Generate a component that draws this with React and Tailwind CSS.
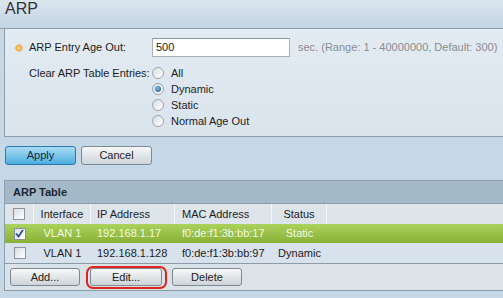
import React from "react";

function Check({ checked }) {
  return (
    <div className="w-[12px] h-[12px] border border-[#8b949c] bg-gradient-to-br from-[#d9dee2] to-white flex items-center justify-center">
      {checked && (
        <svg width="9" height="9" viewBox="0 0 9 9">
          <path d="M1 4.5 L3.5 7.5 L8 1" fill="none" stroke="#2c4f9e" strokeWidth="1.8" />
        </svg>
      )}
    </div>
  );
}

function Radio({ on }) {
  return (
    <div className="w-[12px] h-[12px] rounded-full border border-[#9ba5ae] bg-gradient-to-br from-[#d8dde2] to-white flex items-center justify-center">
      {on && (
        <div className="w-[6px] h-[6px] rounded-full bg-[radial-gradient(circle_at_40%_35%,#7cc0ea,#1c4e7c)]" />
      )}
    </div>
  );
}

function GrayBtn({ children, w }) {
  return (
    <div
      className={`${w} h-[18px] rounded-[3px] border border-[#7e8a93] bg-gradient-to-b from-[#f6f8f9] to-[#cdd4d9] flex items-center justify-center text-[#222]`}
    >
      {children}
    </div>
  );
}

export default function App() {
  const rows = [
    { iface: "VLAN 1", ip: "192.168.1.17", mac: "f0:de:f1:3b:bb:17", status: "Static", sel: true },
    { iface: "VLAN 1", ip: "192.168.1.128", mac: "f0:de:f1:3b:bb:97", status: "Dynamic", sel: false },
  ];
  return (
    <div className="w-[503px] h-[298px] overflow-hidden bg-[#c6d7e5] font-['Liberation_Sans',Arial,sans-serif] text-[11px] text-[#1c1c1c]">
      {/* Title */}
      <div className="h-[29px] border-b border-[#8d9fac] bg-gradient-to-b from-[#dbe6ef] to-[#c3d4e3]">
        <div className="pl-[5px] text-[16px] leading-[18px] text-[#333]">ARP</div>
      </div>

      {/* Form panel */}
      <div className="ml-[4px] h-[108px] border-l border-b border-[#8d9fac] bg-gradient-to-b from-[#e3ebf2] to-[#dae4ed] pt-[9px]">
        <div className="flex items-center h-[19px]">
          <div className="ml-[10px] w-[8px] h-[8px]">
            <svg width="8" height="8" viewBox="0 0 8 8">
              <g stroke="#f0a030" strokeWidth="1.4">
                <line x1="4" y1="0" x2="4" y2="8" />
                <line x1="0" y1="4" x2="8" y2="4" />
                <line x1="1.2" y1="1.2" x2="6.8" y2="6.8" />
                <line x1="6.8" y1="1.2" x2="1.2" y2="6.8" />
              </g>
              <circle cx="4" cy="4" r="2.4" fill="#f7b340" />
              <circle cx="4" cy="4" r="1" fill="#fde6b0" />
            </svg>
          </div>
          <div className="ml-[6px] w-[123px]">ARP Entry Age Out:</div>
          <div className="w-[138px] h-[19px] border border-[#a9b2ba] border-t-[#8f989f] bg-white flex items-center pl-[3px]">
            500
          </div>
          <div className="ml-[8px] text-[#8a8d90]">sec. (Range: 1 - 40000000, Default: 300)</div>
        </div>
        <div className="flex mt-[8px]">
          <div className="ml-[24px] w-[123px] h-[16px] flex items-center">Clear ARP Table Entries:</div>
          <div className="flex flex-col">
            {[
              ["All", false],
              ["Dynamic", true],
              ["Static", false],
              ["Normal Age Out", false],
            ].map(([l, on]) => (
              <div key={l} className="h-[16px] flex items-center gap-[7px]">
                <Radio on={on} />
                <span>{l}</span>
              </div>
            ))}
          </div>
        </div>
      </div>

      {/* Apply / Cancel */}
      <div className="flex gap-[5px] ml-[5px] mt-[9px]">
        <div className="w-[71px] h-[19px] rounded-[3px] border border-[#2a78ad] bg-gradient-to-b from-[#a8dcf4] to-[#4aaee0] flex items-center justify-center text-[#0d2b42]">
          Apply
        </div>
        <div className="w-[71px] h-[19px] rounded-[3px] border border-[#7e8a93] bg-gradient-to-b from-[#f6f8f9] to-[#cdd4d9] flex items-center justify-center text-[#222]">
          Cancel
        </div>
      </div>

      {/* ARP Table */}
      <div className="ml-[4px] mt-[15px] border-l border-[#8d9fac]">
        <div className="h-[24px] border-t border-b border-[#8d9fac] bg-[#a3b9c8] flex items-center pl-[8px] font-bold text-[#1a2530]">
          ARP Table
        </div>
        <div className="flex h-[20px] bg-[#dde5eb] items-center">
          <div className="w-[29px] h-full border-r border-[#f5f8fa] flex items-center justify-center">
            <Check />
          </div>
          <div className="w-[57px] h-full border-r border-[#f5f8fa] flex items-center justify-center">Interface</div>
          <div className="w-[84px] h-full border-r border-[#f5f8fa] flex items-center pl-[6px]">IP Address</div>
          <div className="w-[97px] h-full border-r border-[#f5f8fa] flex items-center pl-[7px]">MAC Address</div>
          <div className="w-[55px] h-full border-r border-[#f5f8fa] flex items-center justify-center">Status</div>
        </div>
        {rows.map((r, i) => (
          <div
            key={i}
            className={
              r.sel
                ? "flex h-[19px] items-center bg-gradient-to-b from-[#abd25a] to-[#88b036] text-[#f3f9e6]"
                : "flex h-[21px] items-center bg-[#d7e2ec] border-b border-[#8c9ba7]"
            }
          >
            <div className="w-[29px] flex justify-center">
              <Check checked={r.sel} />
            </div>
            <div className="w-[57px] text-center">{r.iface}</div>
            <div className="w-[84px] pl-[6px]">{r.ip}</div>
            <div className="w-[97px] pl-[7px]">{r.mac}</div>
            <div className="w-[55px] text-center">{r.status}</div>
          </div>
        ))}
        <div className="h-[27px] bg-[#dbe2e8] border-b border-[#8c9ba7] flex items-start pt-[4px] pl-[5px] gap-[10px]">
          <GrayBtn w="w-[70px]">Add...</GrayBtn>
          <div className="relative">
            <GrayBtn w="w-[72px]">Edit...</GrayBtn>
            <div className="absolute left-[-4px] top-[-2px] w-[81px] h-[23px] border-2 border-[#e0231b] rounded-[7px]" />
          </div>
          <GrayBtn w="w-[70px]">Delete</GrayBtn>
        </div>
      </div>
    </div>
  );
}
